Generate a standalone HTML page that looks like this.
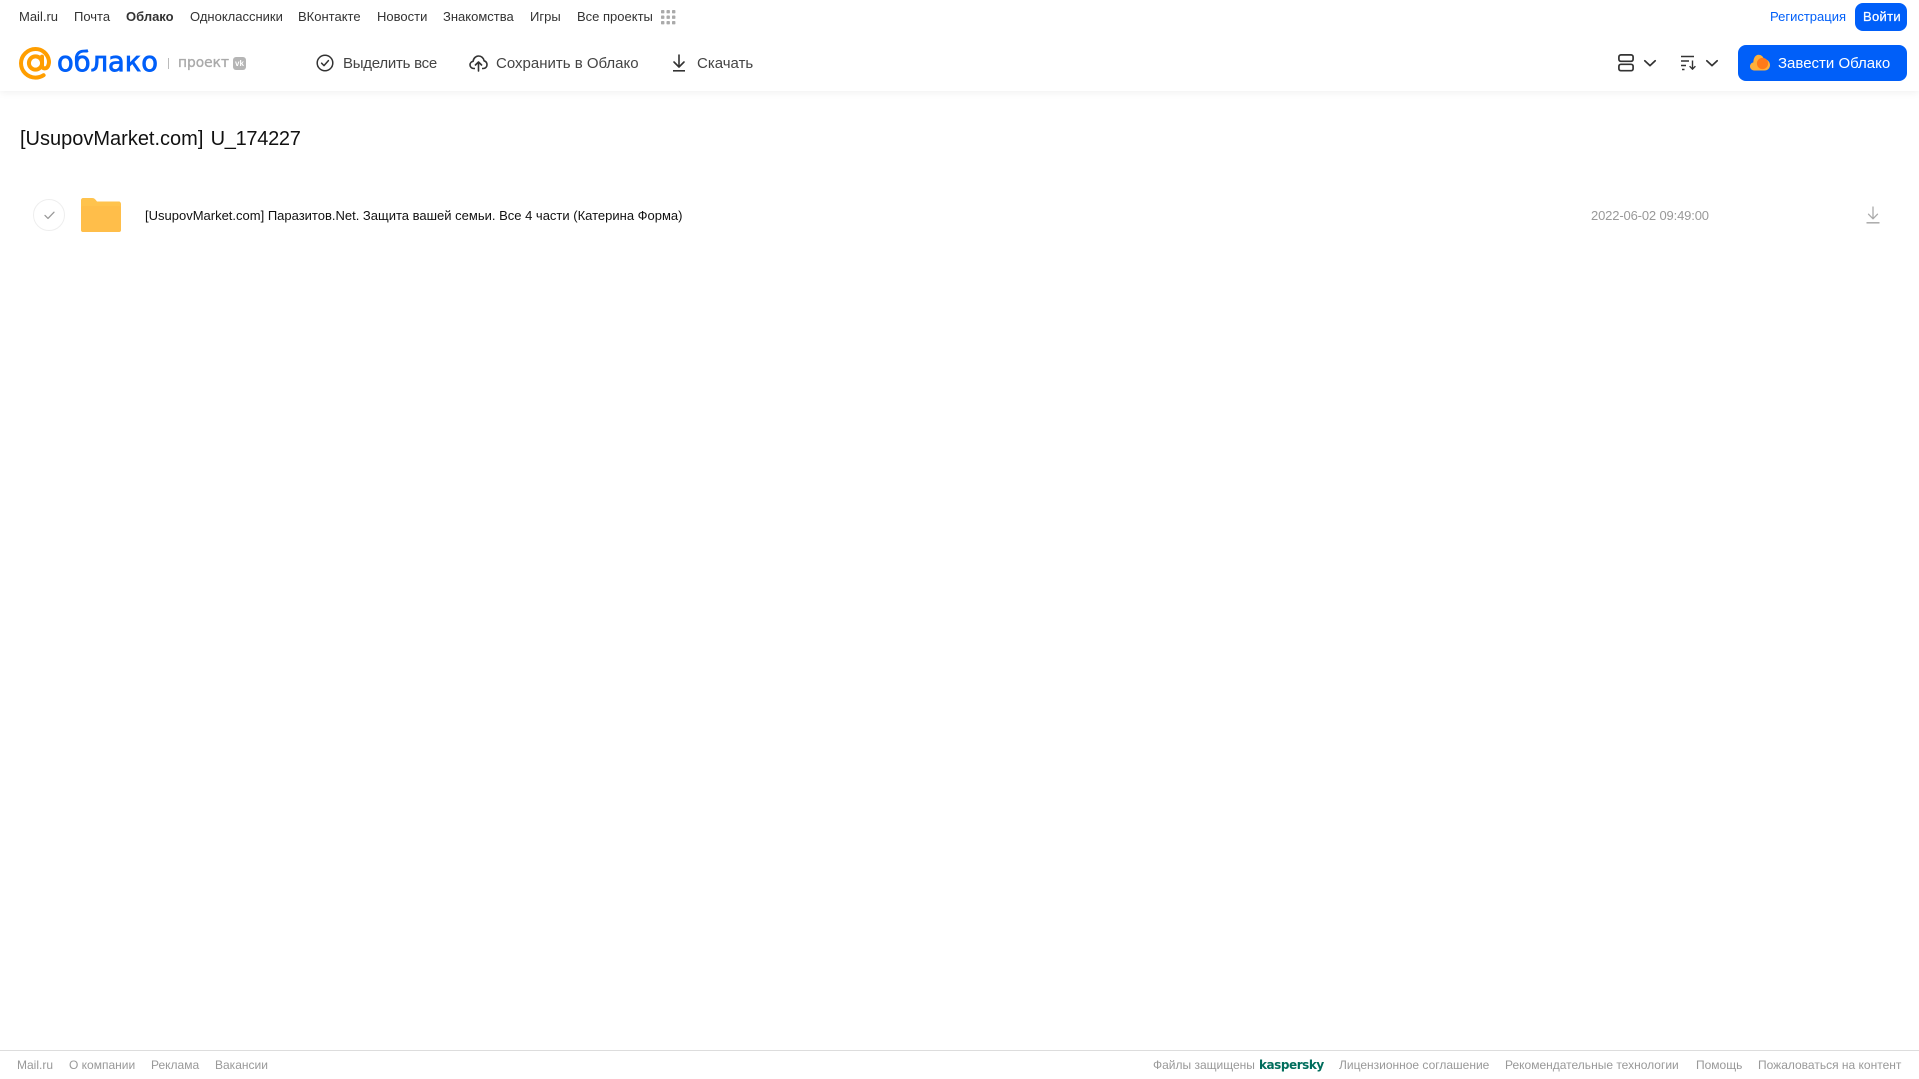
<!DOCTYPE html>
<html lang="ru"><head><meta charset="utf-8"><title>Облако</title>
<style>
html,body{margin:0;padding:0;width:1919px;height:1079px;overflow:hidden;background:#fff;font-family:"Liberation Sans",sans-serif}
.t{position:absolute;white-space:nowrap;line-height:20px}
.n{top:7px;font-size:13px;color:#333}
.a{top:54px;font-size:15px;color:#444}
.f{top:1055px;font-size:12px;color:#999}
svg{position:absolute;overflow:visible}
</style></head><body>
<div style="position:absolute;left:0;top:0;width:1919px;height:91px;background:#fff;box-shadow:0 1px 8px rgba(0,0,0,.07)"></div>

<span class="t n" style="left:19px">Mail.ru</span>
<span class="t n" style="left:74px">Почта</span>
<span class="t n" style="left:126px;font-weight:bold">Облако</span>
<span class="t n" style="left:190px">Одноклассники</span>
<span class="t n" style="left:298px">ВКонтакте</span>
<span class="t n" style="left:377px">Новости</span>
<span class="t n" style="left:443px">Знакомства</span>
<span class="t n" style="left:530px">Игры</span>
<span class="t n" style="left:577px">Все проекты</span>
<svg style="left:661px;top:10px" width="15" height="15" fill="#aaa"><rect x="0" y="0" width="3.4" height="3.4" rx=".8"/><rect x="5.5" y="0" width="3.4" height="3.4" rx=".8"/><rect x="11" y="0" width="3.4" height="3.4" rx=".8"/><rect x="0" y="5.5" width="3.4" height="3.4" rx=".8"/><rect x="5.5" y="5.5" width="3.4" height="3.4" rx=".8"/><rect x="11" y="5.5" width="3.4" height="3.4" rx=".8"/><rect x="0" y="11" width="3.4" height="3.4" rx=".8"/><rect x="5.5" y="11" width="3.4" height="3.4" rx=".8"/><rect x="11" y="11" width="3.4" height="3.4" rx=".8"/></svg>

<span class="t" style="left:1770px;top:7px;font-size:13px;color:#005ff9">Регистрация</span>
<div style="position:absolute;left:1855px;top:3px;width:52px;height:28px;border-radius:8px;background:#005ff9"></div>
<span class="t" style="left:1863px;top:7px;font-size:13px;color:#fff;letter-spacing:.3px;-webkit-text-stroke:.25px #fff">Войти</span>

<!-- logo -->
<svg style="left:19px;top:47px" width="33" height="33" viewBox="0 0 33 33" fill="none"><circle cx="16.5" cy="16" r="6.6" stroke="#ff9e00" stroke-width="4"/><path d="M23 9.6V18.6C23 22 27.5 22.4 29 19.2C30 17 30.2 15.5 29.9 13.6C28.8 6.6 23 2 16.5 2C8.8 2 2 8.4 2 16.3C2 24.4 8.6 30.6 16.5 30.6C19.6 30.6 22.2 29.8 24.6 28.2" stroke="#ff9e00" stroke-width="4" stroke-linecap="round"/></svg>
<svg style="left:0;top:0" width="300" height="90"><text x="57" y="71" font-family="'DejaVu Sans',sans-serif" font-size="27.5" fill="#005ff9" stroke="#005ff9" stroke-width=".8" textLength="101" lengthAdjust="spacingAndGlyphs">облако</text><text x="178" y="67" font-family="'DejaVu Sans',sans-serif" font-size="14" fill="#aaa" stroke="#aaa" stroke-width=".35" textLength="51" lengthAdjust="spacingAndGlyphs">проект</text></svg>
<div style="position:absolute;left:168px;top:58px;width:1px;height:11px;background:#bbb"></div>
<div style="position:absolute;left:233px;top:57px;width:13px;height:13px;border-radius:3px;background:#b5b5b5;color:#fff;font-size:8px;font-weight:bold;line-height:13px;text-align:center">vk</div>

<!-- toolbar -->
<svg style="left:316px;top:54px" width="18" height="18" viewBox="0 0 18 18" fill="none" stroke="#333" stroke-width="1.5"><circle cx="9" cy="9" r="7.8"/><path d="M5.6 9.2L8 11.6L12.4 6.6" stroke-linecap="round" stroke-linejoin="round"/></svg>
<span class="t a" style="left:343px;letter-spacing:-.25px">Выделить все</span>
<svg style="left:469px;top:54px" width="19" height="18" viewBox="0 0 19 18" fill="none" stroke="#333" stroke-width="1.6"><path d="M6 14.5H4.8C2.6 14.5 1 12.9 1 10.9C1 9 2.4 7.6 4.1 7.3C4.5 4.2 6.8 2 9.6 2C12.4 2 14.6 4 15.1 6.8C16.8 7.3 18 8.8 18 10.7C18 12.8 16.4 14.5 14.2 14.5H13" stroke-linejoin="round"/><path d="M9.5 17V8.2M6.4 11L9.5 8L12.6 11" stroke-linecap="round" stroke-linejoin="round"/></svg>
<span class="t a" style="left:496px">Сохранить в Облако</span>
<svg style="left:672px;top:54px" width="14" height="18" viewBox="0 0 14 18" fill="none" stroke="#333" stroke-width="1.6"><path d="M7 1V12.5M2 8L7 13L12 8" stroke-linecap="round" stroke-linejoin="round"/><path d="M1 16.8H13"/></svg>
<span class="t a" style="left:697px">Скачать</span>

<svg style="left:1618px;top:54px" width="16" height="18" viewBox="0 0 16 18" fill="none" stroke="#333" stroke-width="1.7"><rect x=".9" y=".9" width="14.2" height="6.4" rx="2"/><rect x=".9" y="10.3" width="14.2" height="6.4" rx="2"/></svg>
<svg style="left:1644px;top:60px" width="12" height="7" fill="none" stroke="#333" stroke-width="1.7"><path d="M.8.8L6 5.6L11.2.8" stroke-linecap="round" stroke-linejoin="round"/></svg>
<svg style="left:1681px;top:55px" width="16" height="16" viewBox="0 0 16 16" fill="none" stroke="#333" stroke-width="1.4"><path d="M0 1.5H13M0 6H8M0 10.5H5M1 14.5H3.5" /><path d="M11.5 5.5V14M8.6 11.2L11.5 14.2L14.4 11.2" stroke-linejoin="round"/></svg>
<svg style="left:1706px;top:60px" width="12" height="7" fill="none" stroke="#333" stroke-width="1.7"><path d="M.8.8L6 5.6L11.2.8" stroke-linecap="round" stroke-linejoin="round"/></svg>

<div style="position:absolute;left:1738px;top:45px;width:169px;height:36px;border-radius:8px;background:#005ff9"></div>
<svg style="left:1750px;top:54px" width="20" height="17" viewBox="0 0 20 17"><path d="M4.2 16.5C1.9 16.5 0 14.7 0 12.4C0 10.4 1.4 8.8 3.3 8.4C3.5 4 5.5 .8 8.5 .8C11 .8 13 2.4 13.8 4.8C17 5.2 20 7.6 20 11C20 14.2 17.6 16.5 14.6 16.5Z" fill="#ffb03a"/><circle cx="12.5" cy="9.5" r="5.6" fill="#ff7a1a"/></svg>
<span class="t" style="left:1778px;top:54px;font-size:15px;color:#fff">Завести Облако</span>

<!-- content -->
<span class="t" style="left:20px;top:129px;font-size:20px;color:#111">[UsupovMarket.com]<span style="margin-left:2px;letter-spacing:-.3px"> U_174227</span></span>

<div style="position:absolute;left:33px;top:199px;width:30px;height:30px;border-radius:50%;border:1px solid #eee"></div>
<svg style="left:44px;top:211px" width="11" height="9" fill="none" stroke="#999" stroke-width="1.3"><path d="M1 4.4L4 7.4L10 1.2" stroke-linecap="round" stroke-linejoin="round"/></svg>
<svg style="left:81px;top:198px" width="40" height="34" viewBox="0 0 40 34"><path d="M2 0H11C13 0 14 1 15 2.200L16 3.500H38C39 3.500 40 4.500 40 6V31C40 32.800 39 34 37.500 34H2.500C1 34 0 32.800 0 31V2C0 1 1 0 2 0Z" fill="#ffc34d"/><rect x="0" y="8" width="40" height="26" rx="2" fill="#ffbe4a"/></svg>

<span class="t" style="left:145px;top:206px;font-size:13px;color:#111">[UsupovMarket.com] Паразитов.Net. Защита вашей семьи. Все 4 части (Катерина Форма)</span>
<span class="t" style="left:1591px;top:206px;font-size:13px;color:#999;letter-spacing:-.15px">2022-06-02 09:49:00</span>
<svg style="left:1866px;top:206px" width="14" height="18" viewBox="0 0 14 18" fill="none" stroke="#aaa" stroke-width="1.3"><path d="M7 1V12.500M2.500 8.200L7 12.800L11.500 8.200" stroke-linecap="round" stroke-linejoin="round"/><path d="M.5 16.800H13.500" stroke-width="1.500"/></svg>

<!-- footer -->
<div style="position:absolute;left:0;top:1050px;width:1919px;height:1px;background:#ddd"></div>
<span class="t f" style="left:17px">Mail.ru</span>
<span class="t f" style="left:69px">О компании</span>
<span class="t f" style="left:151px">Реклама</span>
<span class="t f" style="left:215px">Вакансии</span>
<span class="t f" style="left:1153px">Файлы защищены</span>
<span class="t f" style="left:1259px;top:1055px;color:#006d5c;font-weight:bold;font-size:12px;font-family:'DejaVu Sans',sans-serif;letter-spacing:-.45px">kaspersky</span>
<span class="t f" style="left:1339px">Лицензионное соглашение</span>
<span class="t f" style="left:1505px">Рекомендательные технологии</span>
<span class="t f" style="left:1696px">Помощь</span>
<span class="t f" style="left:1758px">Пожаловаться на контент</span>
</body></html>
